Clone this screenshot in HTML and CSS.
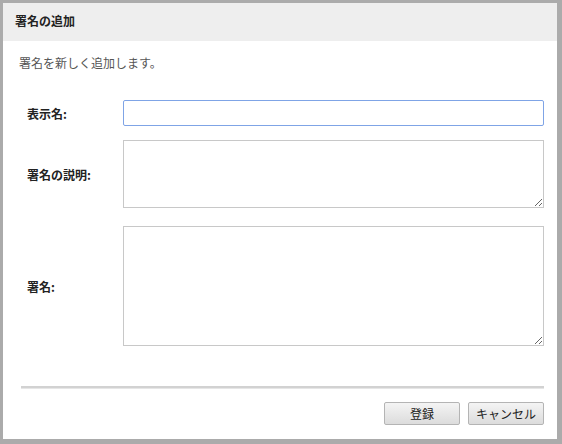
FILE: index.html
```html
<!DOCTYPE html>
<html lang="ja">
<head>
<meta charset="utf-8">
<link rel="stylesheet" href="styles.css">
</head>
<body>
<div class="dialog">
  <div class="header">署名の追加</div>
  <div class="content">
    <p class="desc">署名を新しく追加します。</p>
    <div class="form">
      <label class="label">表示名:</label>
      <input class="field input" type="text">
      <label class="label">署名の説明:</label>
      <textarea class="field ta1"></textarea>
      <label class="label">署名:</label>
      <textarea class="field ta2"></textarea>
    </div>
    <div class="sep"></div>
    <div class="actions">
      <button class="btn">登録</button>
      <button class="btn">キャンセル</button>
    </div>
  </div>
</div>
</body>
</html>
```

FILE: styles.css
```css
html, body {
  margin: 0;
  padding: 0;
  background: #fff;
}
body {
  font-family: "Noto Sans CJK JP", "Noto Sans", sans-serif;
  font-size: 12px;
  color: #222;
}
.dialog {
  width: 562px;
  height: 444px;
  box-sizing: border-box;
  border-style: solid;
  border-color: #ababab;
  border-width: 3px 5px 5px 3px;
  display: flex;
  flex-direction: column;
}
.header {
  height: 38px;
  line-height: 36px;
  background: #eeeeee;
  font-weight: bold;
  padding-left: 12px;
  color: #222;
}
.content {
  padding: 0 13px 0 15px;
}
.desc {
  margin: 13px 0 0 1px;
  line-height: 18px;
  color: #555;
}
.form {
  display: grid;
  grid-template-columns: 105px 1fr;
  row-gap: 14px;
  margin-top: 28px;
}
.form .ta2 { margin-top: 4px; }
.label {
  align-self: center;
  padding-left: 9px;
  font-weight: bold;
  color: #222;
}
.label:nth-of-type(3) { margin-top: 4px; }
.field {
  box-sizing: border-box;
  width: 100%;
  margin: 0;
  border: 1px solid #c8c8c8;
  background: #fff;
  font-family: inherit;
  font-size: 12px;
}
.input {
  height: 26px;
  border: 1px solid #7fa4e6;
  border-radius: 2px;
  outline: none;
}
.ta1 { height: 68px; resize: vertical; }
.ta2 { height: 120px; resize: vertical; }
.sep {
  margin: 40px 0 0 3px;
  height: 2px;
  background: #d2d2d2;
  border-bottom: 1px solid #e6e6e6;
}
.actions {
  display: flex;
  justify-content: flex-end;
  gap: 8px;
  margin-top: 13px;
}
.btn {
  width: 76px;
  height: 23px;
  padding: 0;
  border: 1px solid #b4b4b4;
  border-radius: 2px;
  background: linear-gradient(#f4f4f4, #dcdcdc);
  font-family: inherit;
  font-size: 12px;
  color: #222;
}
```
